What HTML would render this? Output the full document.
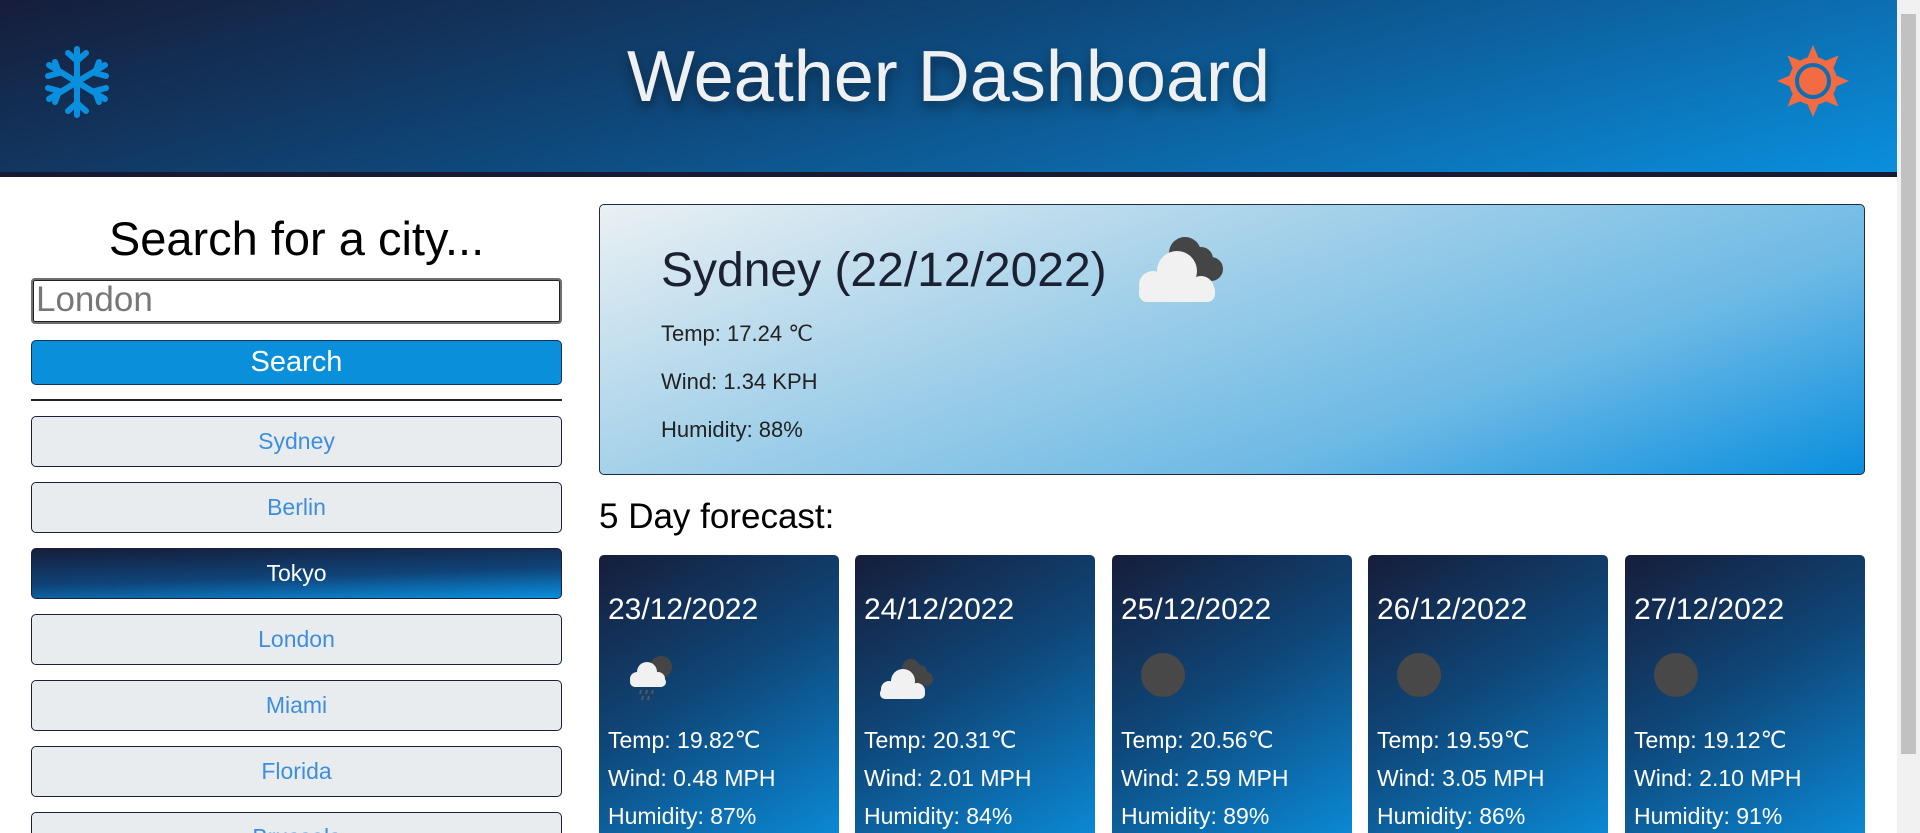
<!DOCTYPE html>
<html><head><meta charset="utf-8"><style>
*{box-sizing:border-box}
html,body{margin:0;width:1920px;height:833px;overflow:hidden;background:#fff}
body{font-family:"Liberation Sans",sans-serif}
#wrap{position:relative;width:1920px;height:833px;overflow:hidden}
.hdr{position:absolute;left:0;top:0;width:1897px;background:linear-gradient(165deg,#161d3a 0%,#0e4a7e 45%,#0a8fde 100%);border-bottom:5px solid #161a33;height:177px}
.title{position:absolute;left:0;width:1897px;top:36px;text-align:center;color:#eef0f2;font-size:72px;text-shadow:0 6px 12px rgba(0,0,0,.45)}
.sb{position:absolute;right:0;top:0;width:23px;height:833px;background:#f1f1f1}
.sb div{position:absolute;left:4px;right:4px;top:14px;height:740px;background:#c1c1c1}
.left{position:absolute;left:31px;width:531px}
.h2{position:absolute;left:31px;width:531px;top:211px;text-align:center;font-size:47px;color:#000}
.inp{top:278px;height:46px;border:2px solid #6f6f6f;border-radius:4px;color:#777;font-size:35px;padding-left:3px;line-height:40px;box-shadow:inset 0 0 0 1px #222}
.btn{top:340px;height:45px;background:#0a8fda;border:1px solid #15305a;border-radius:5px;color:#fff;font-size:29px;text-align:center;line-height:42px}
.hr{top:399px;height:2px;background:#222}
.city{height:51px;background:#e9ecef;border:1px solid #1a1f3a;border-radius:5px;color:#3d8fdc;font-size:23px;text-align:center;line-height:49px}
.city.on{background:linear-gradient(178deg,#161d3a 0%,#0f4479 55%,#0a8fde 100%);color:#fff}
.main{position:absolute;left:599px;top:204px;width:1266px;height:271px;border:1px solid #1f2a44;border-radius:5px;background:linear-gradient(160deg,#eaf0f3 0%,#a9d3ea 35%,#6cb9e5 70%,#0a8fde 100%)}
.main .t{position:absolute;left:61px;top:38px;font-size:48px;color:#1b2032}
.main .p{position:absolute;left:61px;font-size:22px;color:#222}
.f5{position:absolute;left:599px;top:497px;font-size:35px;color:#000}
.card{position:absolute;top:555px;width:240px;height:300px;border-radius:5px;background:linear-gradient(150deg,#161d3a 0%,#0f4779 45%,#0a8fde 100%);color:#fff}
.card .d{position:absolute;left:9px;top:38px;font-size:30px}
.card .l{position:absolute;left:9px;font-size:23px}
.moon{position:absolute;left:29px;top:98px;width:44px;height:44px;border-radius:50%;background:#484848}
</style></head><body><div id="wrap">
<div class="hdr"></div>
<div class="title">Weather Dashboard</div>
<svg style="position:absolute;left:44px;top:46px" width="66" height="72" viewBox="0 0 66 72">
<g stroke="#0a8fde" stroke-width="6" stroke-linecap="round" fill="none">
<line x1="33" y1="3" x2="33" y2="69"/><line x1="5" y1="19" x2="61" y2="53"/><line x1="5" y1="53" x2="61" y2="19"/>
<polyline points="24,7 33,15 42,7"/><polyline points="24,65 33,57 42,65"/>
<polyline points="4,30 15,27 11,16"/><polyline points="62,42 51,45 55,56"/>
<polyline points="4,42 15,45 11,56"/><polyline points="62,30 51,27 55,16"/>
</g></svg>
<svg style="position:absolute;left:1777px;top:45px" width="72" height="72" viewBox="0 0 72 72">
<g fill="#f26b43"><circle cx="36" cy="36" r="24"/>
<g id="r"><polygon points="36,0 42,14 30,14"/></g>
<use href="#r" transform="rotate(45 36 36)"/><use href="#r" transform="rotate(90 36 36)"/><use href="#r" transform="rotate(135 36 36)"/><use href="#r" transform="rotate(180 36 36)"/><use href="#r" transform="rotate(225 36 36)"/><use href="#r" transform="rotate(270 36 36)"/><use href="#r" transform="rotate(315 36 36)"/></g>
<circle cx="36" cy="36" r="16" fill="none" stroke="#0b6fb2" stroke-width="4"/></svg>
<div class="sb"><div></div></div>

<div class="h2">Search for a city...</div>
<div class="left inp">London</div>
<div class="left btn">Search</div>
<div class="left hr"></div>
<div class="left city" style="top:416px">Sydney</div>
<div class="left city" style="top:482px">Berlin</div>
<div class="left city on" style="top:548px">Tokyo</div>
<div class="left city" style="top:614px">London</div>
<div class="left city" style="top:680px">Miami</div>
<div class="left city" style="top:746px">Florida</div>
<div class="left city" style="top:812px">Brussels</div>

<div class="main">
<div class="t">Sydney (22/12/2022)</div>
<svg style="position:absolute;left:527px;top:24px" width="112" height="74" viewBox="0 0 112 74">
<g fill="#454545"><circle cx="58" cy="24" r="16"/><circle cx="74" cy="30" r="12"/><circle cx="84" cy="40" r="12"/><rect x="58" y="30" width="26" height="22"/></g>
<g fill="#f1f1f1"><circle cx="50" cy="42" r="20"/><circle cx="26" cy="56" r="14"/><circle cx="74" cy="60" r="13"/><rect x="12" y="54" width="76" height="19" rx="8"/></g></svg>
<div class="p" style="top:116px">Temp: 17.24 ℃</div>
<div class="p" style="top:164px">Wind: 1.34 KPH</div>
<div class="p" style="top:212px">Humidity: 88%</div>
</div>
<div class="f5">5 Day forecast:</div>

<div class="card" style="left:599px"><div class="d">23/12/2022</div>
<svg style="position:absolute;left:26px;top:100px" width="50" height="48" viewBox="0 0 50 48">
<circle cx="36" cy="12" r="11" fill="#454545"/>
<g fill="#f1f1f1"><circle cx="22" cy="17" r="10"/><circle cx="12" cy="24" r="7"/><circle cx="33" cy="24" r="7"/><rect x="5" y="22" width="36" height="10" rx="5"/></g>
<g stroke="#555" stroke-width="2"><line x1="16" y1="35" x2="15" y2="39"/><line x1="22" y1="35" x2="21" y2="39"/><line x1="28" y1="35" x2="27" y2="39"/><line x1="18" y1="41" x2="17" y2="45"/><line x1="24" y1="41" x2="23" y2="45"/></g></svg>
<div class="l" style="top:172px">Temp: 19.82℃</div><div class="l" style="top:210px">Wind: 0.48 MPH</div><div class="l" style="top:248px">Humidity: 87%</div></div>

<div class="card" style="left:855px"><div class="d">24/12/2022</div>
<svg style="position:absolute;left:20px;top:103px" width="64" height="42" viewBox="0 0 64 42">
<g fill="#454545"><circle cx="36" cy="10" r="9"/><circle cx="45" cy="14" r="7"/><circle cx="51" cy="21" r="7"/><rect x="36" y="14" width="15" height="13"/></g>
<g fill="#f1f1f1"><circle cx="28" cy="23" r="12"/><circle cx="14" cy="31" r="8"/><circle cx="42" cy="33" r="8"/><rect x="5" y="30" width="45" height="11" rx="5"/></g></svg>
<div class="l" style="top:172px">Temp: 20.31℃</div><div class="l" style="top:210px">Wind: 2.01 MPH</div><div class="l" style="top:248px">Humidity: 84%</div></div>

<div class="card" style="left:1112px"><div class="d">25/12/2022</div><div class="moon"></div>
<div class="l" style="top:172px">Temp: 20.56℃</div><div class="l" style="top:210px">Wind: 2.59 MPH</div><div class="l" style="top:248px">Humidity: 89%</div></div>

<div class="card" style="left:1368px"><div class="d">26/12/2022</div><div class="moon"></div>
<div class="l" style="top:172px">Temp: 19.59℃</div><div class="l" style="top:210px">Wind: 3.05 MPH</div><div class="l" style="top:248px">Humidity: 86%</div></div>

<div class="card" style="left:1625px"><div class="d">27/12/2022</div><div class="moon"></div>
<div class="l" style="top:172px">Temp: 19.12℃</div><div class="l" style="top:210px">Wind: 2.10 MPH</div><div class="l" style="top:248px">Humidity: 91%</div></div>
</div></body></html>
